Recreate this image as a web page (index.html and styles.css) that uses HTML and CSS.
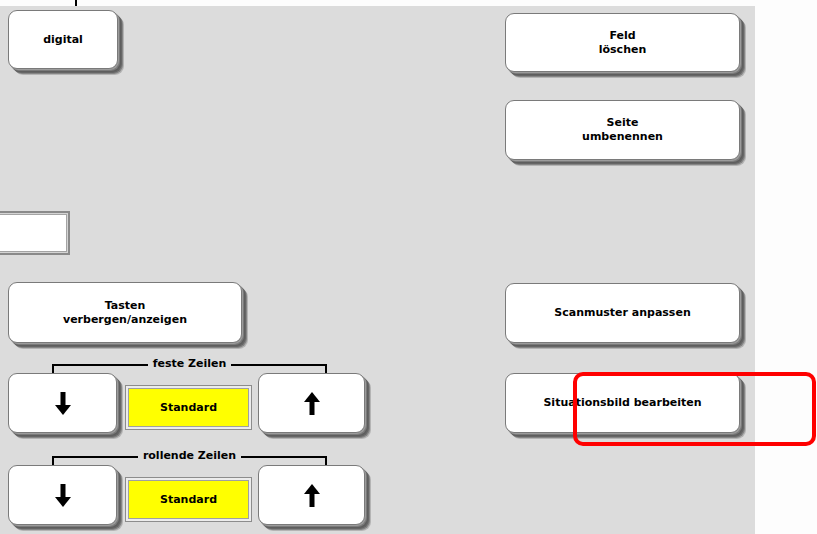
FILE: index.html
```html
<!DOCTYPE html>
<html lang="de">
<head>
<meta charset="utf-8">
<title>Einstellungen</title>
<link rel="stylesheet" href="styles.css">
</head>
<body>
<div class="strip"><span class="tick"></span></div>
<div class="panel">
  <div class="col-left">
    <button class="btn btn-digital">digital</button>
    <div class="field"></div>
    <button class="btn btn-tasten">Tasten<br>verbergen/anzeigen</button>

    <div class="group group-first">
      <div class="bracket"><span class="bracket-label">feste Zeilen</span></div>
      <div class="row">
        <button class="btn btn-arrow btn-down" aria-label="runter">
          <svg width="16" height="23" viewBox="0 0 16 23"><rect x="5.5" y="0" width="5" height="14" fill="#000"/><polygon points="0,13 16,13 8,23" fill="#000"/></svg>
        </button>
        <div class="std"><div class="std-inner">Standard</div></div>
        <button class="btn btn-arrow btn-up" aria-label="hoch">
          <svg width="16" height="23" viewBox="0 0 16 23"><polygon points="0,10 16,10 8,0" fill="#000"/><rect x="5.5" y="9" width="5" height="14" fill="#000"/></svg>
        </button>
      </div>
    </div>

    <div class="group group-second">
      <div class="bracket"><span class="bracket-label">rollende Zeilen</span></div>
      <div class="row">
        <button class="btn btn-arrow btn-down" aria-label="runter">
          <svg width="16" height="23" viewBox="0 0 16 23"><rect x="5.5" y="0" width="5" height="14" fill="#000"/><polygon points="0,13 16,13 8,23" fill="#000"/></svg>
        </button>
        <div class="std"><div class="std-inner">Standard</div></div>
        <button class="btn btn-arrow btn-up" aria-label="hoch">
          <svg width="16" height="23" viewBox="0 0 16 23"><polygon points="0,10 16,10 8,0" fill="#000"/><rect x="5.5" y="9" width="5" height="14" fill="#000"/></svg>
        </button>
      </div>
    </div>
  </div>

  <div class="col-right">
    <button class="btn btn-wide btn-feld">Feld<br>löschen</button>
    <button class="btn btn-wide btn-seite">Seite<br>umbenennen</button>
    <button class="btn btn-wide btn-scan">Scanmuster anpassen</button>
    <button class="btn btn-wide btn-situation">Situationsbild bearbeiten</button>
  </div>
</div>
<div class="highlight"></div>
</body>
</html>
```
FILE: styles.css
```css
html, body {
  margin: 0;
  padding: 0;
  background: #fdfdfd;
  overflow: hidden;
  width: 817px;
  height: 534px;
  position: relative;
  font-family: "DejaVu Sans", Verdana, sans-serif;
}

.strip {
  height: 6px;
  display: flex;
}

.tick {
  display: block;
  width: 2px;
  height: 6px;
  margin-left: 75px;
  background: #000;
}

.panel {
  width: 755px;
  height: 528px;
  background: #dcdcdc;
  display: flex;
}

.col-left {
  width: 505px;
  display: flex;
  flex-direction: column;
  align-items: flex-start;
}

.col-right {
  width: 250px;
  display: flex;
  flex-direction: column;
  align-items: flex-start;
}

.btn {
  box-sizing: border-box;
  background: #fff;
  border: 1px solid #7a7a7a;
  border-radius: 9px;
  font: bold 11px/14px "DejaVu Sans", Verdana, sans-serif;
  color: #000;
  text-align: center;
  padding: 0;
  display: flex;
  align-items: center;
  justify-content: center;
  box-shadow:
    1px 1px 0 #9c9c9c,
    2px 2px 0 #7a7a7a,
    3px 3px 0 #5e5e5e,
    4px 4px 0 #666666,
    5px 5px 0 #858585,
    6px 6px 0 #b4b4b4;
}

.btn-digital {
  margin: 4px 0 0 8px;
  width: 110px;
  height: 59px;
}

.field {
  box-sizing: border-box;
  margin-top: 142px;
  width: 70px;
  height: 44px;
  background: #fff;
  border: 2px solid #8a8a8a;
  border-left: none;
  box-shadow: inset 0 -1px 0 #d4d4d4, inset -1px 0 0 #d4d4d4, inset 0 1px 0 #d4d4d4, inset 0 -2px 0 #a4a4a4, inset -2px 0 0 #a4a4a4, inset 0 2px 0 #a4a4a4;
}

.btn-tasten {
  margin: 27px 0 0 8px;
  width: 234px;
  height: 61px;
}

.group-first {
  margin-top: 14px;
}

.group-second {
  margin-top: 16px;
}

.bracket {
  box-sizing: border-box;
  margin-left: 52px;
  width: 275px;
  margin-top: 7px;
  border: 2px solid #000;
  border-bottom: none;
  height: 9px;
  display: flex;
  justify-content: center;
}

.bracket-label {
  font: bold 11px/14px "DejaVu Sans", Verdana, sans-serif;
  background: #dcdcdc;
  padding: 0 5px;
  height: 14px;
  margin-top: -9px;
  color: #000;
}

.row {
  display: flex;
  align-items: flex-start;
  margin-left: 8px;
  height: 60px;
}

.btn-arrow {
  height: 60px;
}

.btn-down {
  width: 109px;
}

.btn-up {
  width: 107px;
  margin-left: 6px;
}

.std {
  box-sizing: border-box;
  margin: 12px 0 0 8px;
  width: 127px;
  height: 45px;
  border: 1px solid #8c8c8c;
  background: #ececec;
  padding: 2px;
}

.std-inner {
  box-sizing: border-box;
  height: 100%;
  background: #ffff00;
  border: 1px solid #a0a0a0;
  display: flex;
  align-items: center;
  justify-content: center;
  font: bold 11px/14px "DejaVu Sans", Verdana, sans-serif;
  color: #000;
}

.btn-wide {
  width: 235px;
  height: 60px;
}

.btn-feld {
  margin-top: 7px;
  height: 59px;
}

.btn-seite {
  margin-top: 28px;
}

.btn-scan {
  margin-top: 123px;
}

.btn-situation {
  margin-top: 30px;
}

.highlight {
  position: absolute;
  left: 573px;
  top: 372px;
  width: 243px;
  height: 74px;
  box-sizing: border-box;
  border: 4px solid #ff0000;
  border-radius: 10px;
}
```
